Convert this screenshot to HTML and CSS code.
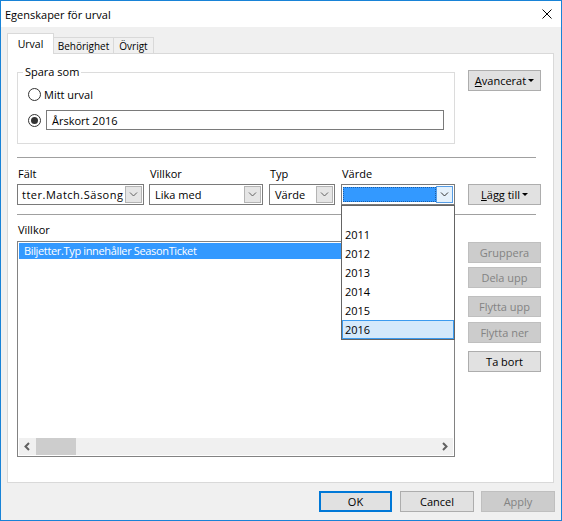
FILE: index.html
```html
<!DOCTYPE html>
<html lang="sv">
<head>
<meta charset="utf-8">
<title>Egenskaper för urval</title>
<link rel="stylesheet" href="styles.css">
</head>
<body>
<div class="window">
  <div class="titlebar">
    <span class="title">Egenskaper för urval</span>
    <svg class="close" width="10" height="10" viewBox="0 0 10 10"><path d="M0.5 0.5L9.5 9.5M9.5 0.5L0.5 9.5" stroke="#000" stroke-width="1" fill="none"/></svg>
  </div>
  <div class="tabs">
    <div class="tab active">Urval</div>
    <div class="tab tab-b">Behörighet</div>
    <div class="tab tab-o">Övrigt</div>
  </div>
  <div class="panel">
    <fieldset class="group">
      <legend>Spara som</legend>
      <div class="radio-row">
        <span class="radio"></span><span class="radio-label">Mitt urval</span>
      </div>
      <div class="radio-row">
        <span class="radio checked"></span><div class="textbox">Årskort 2016</div>
      </div>
    </fieldset>
    <div class="btn adv"><span><u>A</u>vancerat</span><span class="caret"></span></div>

    <div class="sep s1"></div>

    <div class="fields">
      <div class="field f-falt">
        <div class="flabel">Fält</div>
        <div class="combo">
          <div class="ctext scrolled">tter.Match.Säsong</div>
          <div class="cbtn"><svg width="9" height="5" viewBox="0 0 9 5"><polyline points="1,0.5 4.5,4 8,0.5" fill="none" stroke="#606060" stroke-width="1"/></svg></div>
        </div>
      </div>
      <div class="field f-villkor">
        <div class="flabel">Villkor</div>
        <div class="combo">
          <div class="ctext">Lika med</div>
          <div class="cbtn"><svg width="9" height="5" viewBox="0 0 9 5"><polyline points="1,0.5 4.5,4 8,0.5" fill="none" stroke="#606060" stroke-width="1"/></svg></div>
        </div>
      </div>
      <div class="field f-typ">
        <div class="flabel">Typ</div>
        <div class="combo">
          <div class="ctext">Värde</div>
          <div class="cbtn"><svg width="9" height="5" viewBox="0 0 9 5"><polyline points="1,0.5 4.5,4 8,0.5" fill="none" stroke="#606060" stroke-width="1"/></svg></div>
        </div>
      </div>
      <div class="field f-varde">
        <div class="flabel">Värde</div>
        <div class="combo focused">
          <div class="ctext selected"></div>
          <div class="cbtn hot"><svg width="9" height="5" viewBox="0 0 9 5"><polyline points="1,0.5 4.5,4 8,0.5" fill="none" stroke="#333" stroke-width="1"/></svg></div>
          <div class="dropdown">
            <div class="ditem">&nbsp;</div>
            <div class="ditem">2011</div>
            <div class="ditem">2012</div>
            <div class="ditem">2013</div>
            <div class="ditem">2014</div>
            <div class="ditem">2015</div>
            <div class="ditem sel">2016</div>
          </div>
        </div>
      </div>
    </div>
    <div class="btn add"><span><u>L</u>ägg till</span><span class="caret"></span></div>

    <div class="sep s2"></div>

    <div class="list-area">
      <div class="flabel villkor-label">Villkor</div>
      <div class="listbox">
        <div class="rows">
          <div class="row selected">Biljetter.Typ innehåller SeasonTicket</div>
        </div>
        <div class="hscroll">
          <div class="sarrow"><svg width="17" height="17" viewBox="0 0 17 17"><polyline points="10,5 6.5,8.5 10,12" fill="none" stroke="#606060" stroke-width="2"/></svg></div>
          <div class="thumb"></div>
          <div class="track"></div>
          <div class="sarrow"><svg width="17" height="17" viewBox="0 0 17 17"><polyline points="7,5 10.5,8.5 7,12" fill="none" stroke="#606060" stroke-width="2"/></svg></div>
        </div>
      </div>
    </div>
    <div class="side">
      <div class="btn disabled b-grp">Gruppera</div>
      <div class="btn disabled b-dela">Dela upp</div>
      <div class="btn disabled b-upp">Flytta upp</div>
      <div class="btn disabled b-ner">Flytta ner</div>
      <div class="btn b-bort">Ta bort</div>
    </div>
  </div>
  <div class="footer">
    <div class="btn ok">OK</div>
    <div class="btn cancel">Cancel</div>
    <div class="btn disabled apply">Apply</div>
  </div>
</div>
</body>
</html>
```
FILE: styles.css
```css
* { box-sizing: border-box; }
body {
  margin: 0;
  font-family: "Open Sans", "Noto Sans", sans-serif;
  font-size: 11px;
  color: #000;
}
.window {
  width: 562px;
  height: 521px;
  border: 1px solid #1883d7;
  background: #f0f0f0;
  display: flex;
  flex-direction: column;
}
.titlebar {
  flex: none;
  height: 26px;
  background: #fff;
  display: flex;
  align-items: center;
  padding-left: 4px;
}
.close { margin-left: auto; margin-right: 9px; }

.tabs {
  flex: none;
  display: flex;
  align-items: flex-end;
  height: 20px;
  margin: 6px 0 0 6px;
}
.tab {
  height: 16px;
  border: 1px solid #d9d9d9;
  border-bottom: none;
  background: #f0f0f0;
  margin-left: -1px;
  display: flex;
  align-items: center;
  justify-content: center;
  font-size: 10px;
}
.tab.active {
  width: 47px;
  height: 21px;
  margin-left: 0;
  margin-bottom: -1px;
  background: #fff;
  position: relative;
  z-index: 1;
  font-size: 10.5px;
}
.tab-b { width: 61px; }
.tab-o { width: 41px; }

.panel {
  flex: none;
  margin-left: 6px;
  width: 547px;
  height: 430px;
  background: #fff;
  border: 1px solid #d9d9d9;
  display: grid;
  grid-template-columns: 438px 73px;
  column-gap: 13px;
  padding: 10px 12px 0 9px;
  align-content: start;
  align-items: start;
}
.group {
  margin: 0;
  min-width: 0;
  border: 1px solid #dcdcdc;
  padding: 4px 10px 13px 5px;
}
.group legend {
  padding: 0 2px;
  line-height: 16px;
}
.radio-row {
  display: flex;
  align-items: center;
  height: 20px;
  margin-left: 5px;
}
.radio-row + .radio-row { margin-top: 6px; }
.radio {
  flex: none;
  width: 13px;
  height: 13px;
  border: 1px solid #333;
  border-radius: 50%;
  background: #fff;
  display: flex;
  align-items: center;
  justify-content: center;
}
.radio.checked::after {
  content: "";
  width: 7px;
  height: 7px;
  border-radius: 50%;
  background: #333;
}
.radio-label { margin-left: 3px; }
.textbox {
  margin-left: 5px;
  width: 398px;
  height: 20px;
  border: 1px solid #7a7a7a;
  background: #fff;
  padding-left: 5px;
  display: flex;
  align-items: center;
}

.btn {
  width: 73px;
  height: 21px;
  border: 1px solid #adadad;
  background: #e1e1e1;
  display: flex;
  align-items: center;
  justify-content: center;
  white-space: nowrap;
}
.btn.disabled {
  background: #cccccc;
  border-color: #bfbfbf;
  color: #838383;
}
.caret {
  display: inline-block;
  margin-left: 2px;
  border-left: 3px solid transparent;
  border-right: 3px solid transparent;
  border-top: 3px solid #000;
}
.adv { margin-top: 6px; }
.add { align-self: end; }

.sep {
  grid-column: 1 / -1;
  height: 1px;
  background: #a0a0a0;
  margin-right: 5px;
}
.s1 { margin-top: 13px; }
.s2 { margin-top: 9px; }

.fields { display: flex; margin-top: 8px; }
.field { display: flex; flex-direction: column; }
.f-falt { width: 127px; }
.f-villkor { width: 114px; margin-left: 5px; }
.f-typ { width: 66px; margin-left: 6px; }
.f-varde { width: 114px; margin-left: 6px; }
.flabel { height: 15px; line-height: 15px; padding-left: 1px; }
.combo {
  margin-top: 3px;
  height: 21px;
  border: 1px solid #7a7a7a;
  background: #fff;
  padding: 1px;
  display: flex;
  align-items: center;
  position: relative;
}
.ctext {
  flex: 1;
  min-width: 0;
  padding-left: 4px;
  white-space: nowrap;
  overflow: hidden;
}
.ctext.scrolled {
  padding-left: 3px;
  letter-spacing: 0.5px;
}
.ctext.selected {
  height: 15px;
  background: #3399ff;
  border: 1px dotted #1d5ea6;
}
.cbtn {
  flex: none;
  width: 17px;
  height: 17px;
  border: 1px solid #b4b4b4;
  background: #e5e5e5;
  display: flex;
  align-items: center;
  justify-content: center;
}
.cbtn.hot {
  border-color: #569de5;
  background: #e5f1fb;
}
.dropdown {
  position: absolute;
  left: -1px;
  top: calc(100% + 1px);
  width: 114px;
  border: 1px solid #646464;
  background: #fff;
  z-index: 5;
}
.ditem {
  height: 19px;
  line-height: 19px;
  padding-left: 3px;
}
.ditem.sel {
  background: #d4e9fb;
  border: 1px solid #3c9bef;
  line-height: 17px;
  padding-left: 2px;
}

.villkor-label { margin-top: 7px; }
.listbox {
  margin-top: 4px;
  height: 216px;
  border: 1px solid #828282;
  padding: 1px;
  display: flex;
  flex-direction: column;
}
.rows { flex: 1; }
.row {
  height: 16px;
  line-height: 16px;
  padding-left: 5px;
  white-space: nowrap;
  letter-spacing: -0.35px;
}
.row.selected { background: #3399ff; color: #fff; }
.hscroll {
  flex: none;
  height: 17px;
  background: #f0f0f0;
  display: flex;
}
.sarrow { width: 17px; height: 17px; flex: none; }
.sarrow svg { display: block; }
.thumb { width: 40px; background: #cdcdcd; flex: none; }
.track { flex: 1; }

.side { display: flex; flex-direction: column; margin-top: 27px; }
.b-dela { margin-top: 4px; }
.b-upp { margin-top: 8px; }
.b-ner { margin-top: 5px; }
.b-bort { margin-top: 8px; }

.footer {
  flex: none;
  display: flex;
  justify-content: flex-end;
  margin-top: 8px;
  padding-right: 6px;
}
.ok { width: 73px; border: 2px solid #0078d7; }
.cancel { width: 74px; margin-left: 8px; }
.apply { width: 74px; margin-left: 7px; }
```
